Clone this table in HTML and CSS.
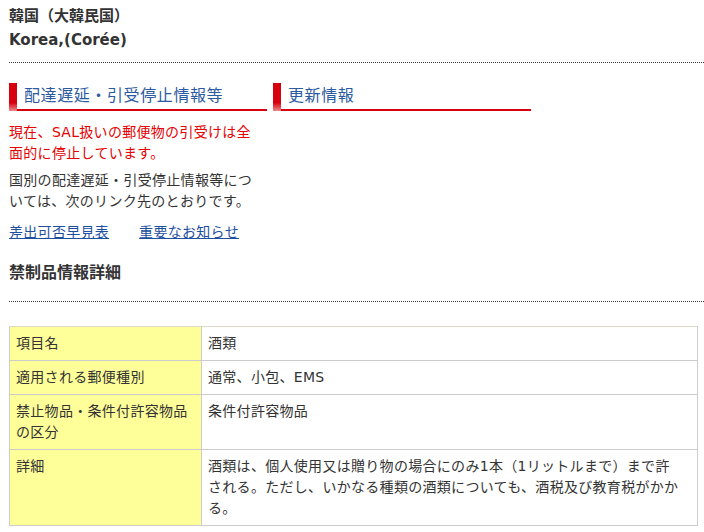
FILE: index.html
```html
<!DOCTYPE html>
<html lang="ja">
<head>
    <meta charset="UTF-8">
    <meta name="viewport" content="width=device-width, initial-scale=1.0">
    <title>禁制品情報 - 韓国</title>
    <link rel="stylesheet" href="styles.css">
</head>
<body>

<div class="page">
    <div class="country">
        <h1 class="country-name">韓国（大韓民国）<br>Korea,(Corée)</h1>
    </div>

    <div class="info-cols">
        <div class="info-col">
            <h2 class="tab-title"><span class="tab-mark"></span><span class="tab-text">配達遅延・引受停止情報等</span></h2>
            <p class="alert">現在、SAL扱いの郵便物の引受けは全面的に停止しています。</p>
            <p class="note">国別の配達遅延・引受停止情報等については、次のリンク先のとおりです。</p>
            <p class="links">
                <a href="#">差出可否早見表</a>
                <a href="#">重要なお知らせ</a>
            </p>
        </div>
        <div class="info-col">
            <h2 class="tab-title"><span class="tab-mark"></span><span class="tab-text">更新情報</span></h2>
        </div>
    </div>

    <h3 class="section-title">禁制品情報詳細</h3>

    <table class="detail-table">
        <tr>
            <th>項目名</th>
            <td>酒類</td>
        </tr>
        <tr>
            <th>適用される郵便種別</th>
            <td>通常、小包、EMS</td>
        </tr>
        <tr>
            <th>禁止物品・条件付許容物品の区分</th>
            <td>条件付許容物品</td>
        </tr>
        <tr>
            <th>詳細</th>
            <td>酒類は、個人使用又は贈り物の場合にのみ1本（1リットルまで）まで許される。ただし、いかなる種類の酒類についても、酒税及び教育税がかかる。</td>
        </tr>
    </table>
</div>

</body>
</html>
```

FILE: styles.css
```css
:root {
    --text-color: #333;
    --alert-color: #e60000;
    --title-color: #2c5aa0;
    --link-color: #1d4f9f;
    --mark-color: #d7000f;
    --table-border: #cccccc;
    --label-background: #ffff99;
}

body {
    margin: 0;
    font-family: "DejaVu Sans", "Noto Sans CJK JP", sans-serif;
    font-size: 14px;
    letter-spacing: 0.3px;
    line-height: 21px;
    color: var(--text-color);
    background: #fff;
}

.page {
    padding: 4px 0 0 9px;
}

.country {
    padding-bottom: 10px;
    border-bottom: 1px dotted #333;
}

.country-name {
    margin: 0;
    font-size: 15px;
    line-height: 24px;
    font-weight: bold;
    letter-spacing: 0;
}

.info-cols {
    display: flex;
    gap: 6px;
    margin-top: 20px;
}

.info-col {
    width: 258px;
}

.tab-title {
    display: flex;
    margin: 0;
    font-size: 16px;
    font-weight: normal;
    line-height: 26px;
    letter-spacing: 0.6px;
}

.tab-mark {
    width: 8px;
    flex-shrink: 0;
    background: linear-gradient(180deg, var(--mark-color) 0%, var(--mark-color) 70%, #ee8a8a 100%);
}

.tab-text {
    flex: 1;
    padding-left: 7px;
    color: var(--title-color);
    border-bottom: 2px solid var(--mark-color);
}

.info-col p {
    margin: 6px 0 0;
    padding-right: 10px;
}

.info-col p.alert {
    margin-top: 11px;
    color: var(--alert-color);
}

.info-col p.links {
    margin-top: 10px;
    display: flex;
    gap: 30px;
}

.links a {
    color: var(--link-color);
    text-decoration: underline;
}

.section-title {
    margin: 18px 0 0;
    padding-bottom: 16px;
    font-size: 16px;
    line-height: 24px;
    font-weight: bold;
    letter-spacing: 0;
    border-bottom: 1px dotted #333;
}

.detail-table {
    width: calc(100% - 6px);
    margin-top: 24px;
    border-collapse: collapse;
    border: 1px solid var(--table-border);
    border-top-color: #dcd9c6;
}

.detail-table th,
.detail-table td {
    padding: 6px;
    text-align: left;
    vertical-align: top;
    font-weight: normal;
    border: 1px solid var(--table-border);
}

.detail-table td {
    padding-right: 17px;
}

.detail-table tr:first-child th,
.detail-table tr:first-child td {
    border-top-color: #dcd9c6;
}

.detail-table th {
    width: 179px;
    background: var(--label-background);
}
```
